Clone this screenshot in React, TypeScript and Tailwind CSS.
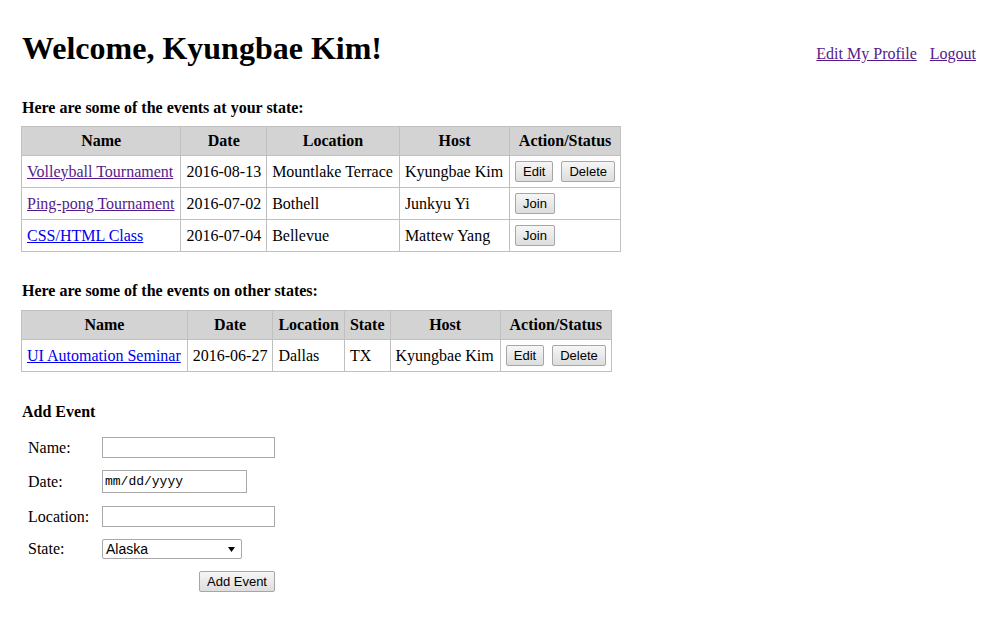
import React from "react";

const serif = { fontFamily: '"Liberation Serif", "Times New Roman", serif' };

function Btn({ children }: { children: React.ReactNode }) {
  return (
    <span
      className="inline-flex h-[21px] items-center rounded-[2px] border border-[#a6a6a6] bg-gradient-to-b from-[#f6f6f6] to-[#dddddd] px-[7px] text-[13px] leading-none text-black"
      style={{ fontFamily: '"Liberation Sans", Arial, sans-serif' }}
    >
      {children}
    </span>
  );
}

const V = "text-[#551a8b] underline";
const B = "text-[#0000ee] underline";

type Row = { name: string; link: string; cells: string[]; actions: string[] };

function EventTable({ headers, rows, wide }: { headers: string[]; rows: Row[]; wide: number[] }) {
  return (
    <table className="border-collapse border border-[#c0c0c0]">
      <thead>
        <tr className="bg-[#d3d3d3]">
          {headers.map((h) => (
            <th key={h} className="border border-[#c0c0c0] px-[5px] py-[5px] text-center text-[16px] font-bold leading-[18px]">
              {h}
            </th>
          ))}
        </tr>
      </thead>
      <tbody>
        {rows.map((r) => (
          <tr key={r.name}>
            <td className="border border-[#c0c0c0] py-[5px] pl-[5px] pr-[6px]">
              <div className="flex h-[21px] items-center whitespace-nowrap">
                <a className={r.link}>{r.name}</a>
              </div>
            </td>
            {r.cells.map((c, i) => (
              <td
                key={i}
                className={
                  wide.includes(i)
                    ? "border border-[#c0c0c0] py-[5px] pl-[5px] pr-[6px]"
                    : "border border-[#c0c0c0] px-[5px] py-[5px]"
                }
              >
                <div className="flex h-[21px] items-center whitespace-nowrap">{c}</div>
              </td>
            ))}
            <td className="border border-[#c0c0c0] px-[5px] py-[5px]">
              <div className="flex h-[21px] items-center gap-[8px] whitespace-nowrap">
                {r.actions.map((a) => (
                  <Btn key={a}>{a}</Btn>
                ))}
              </div>
            </td>
          </tr>
        ))}
      </tbody>
    </table>
  );
}

export default function App() {
  return (
    <div className="min-h-[617px] bg-white pl-[21px] pr-[20px] pt-[30px] text-[16px] text-black" style={serif}>
      <div className="flex items-baseline justify-between">
        <h1 className="pl-[1px] text-[32px] font-bold leading-[37px]">Welcome, Kyungbae Kim!</h1>
        <div className="flex gap-[13px] leading-[18px]">
          <a className={V}>Edit My Profile</a>
          <a className={V}>Logout</a>
        </div>
      </div>

      <div className="mt-[32px] pl-[1px] font-bold leading-[18px]">Here are some of the events at your state:</div>
      <div className="mt-[9px]">
        <EventTable
          wide={[1, 2]}
          headers={["Name", "Date", "Location", "Host", "Action/Status"]}
          rows={[
            { name: "Volleyball Tournament", link: V, cells: ["2016-08-13", "Mountlake Terrace", "Kyungbae Kim"], actions: ["Edit", "Delete"] },
            { name: "Ping-pong Tournament", link: V, cells: ["2016-07-02", "Bothell", "Junkyu Yi"], actions: ["Join"] },
            { name: "CSS/HTML Class", link: B, cells: ["2016-07-04", "Bellevue", "Mattew Yang"], actions: ["Join"] },
          ]}
        />
      </div>

      <div className="mt-[30px] pl-[1px] font-bold leading-[18px]">Here are some of the events on other states:</div>
      <div className="mt-[10px]">
        <EventTable
          wide={[2, 3]}
          headers={["Name", "Date", "Location", "State", "Host", "Action/Status"]}
          rows={[
            { name: "UI Automation Seminar", link: B, cells: ["2016-06-27", "Dallas", "TX", "Kyungbae Kim"], actions: ["Edit", "Delete"] },
          ]}
        />
      </div>

      <div className="mt-[31px] pl-[1px] font-bold leading-[18px]">Add Event</div>

      <div className="mt-[16px] flex flex-col pl-[7px]">
        <div className="flex h-[21px] items-center">
          <span className="w-[74px]">Name:</span>
          <div className="h-[21px] w-[173px] border border-[#a9a9a9] bg-white" />
        </div>
        <div className="mt-[12px] flex h-[23px] items-center">
          <span className="w-[74px]">Date:</span>
          <div className="flex h-[23px] w-[145px] items-center border border-[#a9a9a9] bg-white pl-[2px]">
            <span className="text-[13px] leading-none" style={{ fontFamily: '"Liberation Mono", "DejaVu Sans Mono", monospace' }}>
              mm/dd/yyyy
            </span>
          </div>
        </div>
        <div className="mt-[13px] flex h-[21px] items-center">
          <span className="w-[74px]">Location:</span>
          <div className="h-[21px] w-[173px] border border-[#a9a9a9] bg-white" />
        </div>
        <div className="mt-[12px] flex h-[20px] items-center">
          <span className="w-[74px]">State:</span>
          <div className="flex h-[20px] w-[140px] items-center justify-between rounded-[2px] border border-[#a9a9a9] bg-white pl-[3px] pr-[6px]">
            <span className="text-[14px] leading-none" style={{ fontFamily: '"Liberation Sans", Arial, sans-serif' }}>
              Alaska
            </span>
            <svg width="7" height="5" viewBox="0 0 7 5">
              <polygon points="0,0 7,0 3.5,5" fill="#000" />
            </svg>
          </div>
        </div>
        <div className="mt-[12px] flex w-[247px] justify-end">
          <Btn>Add Event</Btn>
        </div>
      </div>
    </div>
  );
}
